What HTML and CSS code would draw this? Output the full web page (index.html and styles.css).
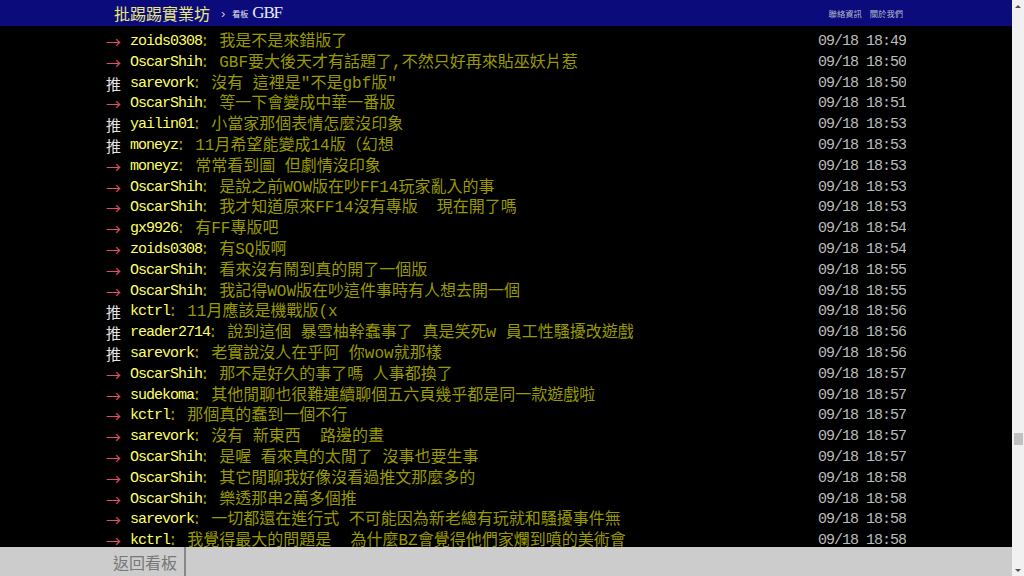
FILE: index.html
```html
<!DOCTYPE html>
<html lang="zh-Hant">
<head>
  <meta charset="UTF-8">
  <meta name="viewport" content="width=device-width, initial-scale=1.0">
  <title>看板 GBF - 批踢踢實業坊</title>
  <link rel="stylesheet" href="styles.css">
</head>
<body>
  <div class="page">
    <div class="main">
      <div id="topbar">
        <div class="topbar-inner">
          <a class="logo" href="#">批踢踢實業坊</a>
          <span class="crumb">›</span>
          <a class="board" href="#"><span class="board-label">看板</span>GBF</a>
          <div class="right">
            <a href="#">聯絡資訊</a>
            <a href="#">關於我們</a>
          </div>
        </div>
      </div>

      <div class="content">
        <div class="bbs-screen">
          <div class="push"><span class="push-tag arrow">→</span><span class="push-userid">zoids0308</span><span class="push-content">: 我是不是來錯版了</span><span class="push-ipdatetime">09/18 18:49</span></div>
          <div class="push"><span class="push-tag arrow">→</span><span class="push-userid">OscarShih</span><span class="push-content">: GBF要大後天才有話題了,不然只好再來貼巫妖片惹</span><span class="push-ipdatetime">09/18 18:50</span></div>
          <div class="push"><span class="push-tag">推</span><span class="push-userid">sarevork</span><span class="push-content">: 沒有 這裡是"不是gbf版"</span><span class="push-ipdatetime">09/18 18:50</span></div>
          <div class="push"><span class="push-tag arrow">→</span><span class="push-userid">OscarShih</span><span class="push-content">: 等一下會變成中華一番版</span><span class="push-ipdatetime">09/18 18:51</span></div>
          <div class="push"><span class="push-tag">推</span><span class="push-userid">yailin01</span><span class="push-content">: 小當家那個表情怎麼沒印象</span><span class="push-ipdatetime">09/18 18:53</span></div>
          <div class="push"><span class="push-tag">推</span><span class="push-userid">moneyz</span><span class="push-content">: 11月希望能變成14版（幻想</span><span class="push-ipdatetime">09/18 18:53</span></div>
          <div class="push"><span class="push-tag arrow">→</span><span class="push-userid">moneyz</span><span class="push-content">: 常常看到圖 但劇情沒印象</span><span class="push-ipdatetime">09/18 18:53</span></div>
          <div class="push"><span class="push-tag arrow">→</span><span class="push-userid">OscarShih</span><span class="push-content">: 是說之前WOW版在吵FF14玩家亂入的事</span><span class="push-ipdatetime">09/18 18:53</span></div>
          <div class="push"><span class="push-tag arrow">→</span><span class="push-userid">OscarShih</span><span class="push-content">: 我才知道原來FF14沒有專版  現在開了嗎</span><span class="push-ipdatetime">09/18 18:53</span></div>
          <div class="push"><span class="push-tag arrow">→</span><span class="push-userid">gx9926</span><span class="push-content">: 有FF專版吧</span><span class="push-ipdatetime">09/18 18:54</span></div>
          <div class="push"><span class="push-tag arrow">→</span><span class="push-userid">zoids0308</span><span class="push-content">: 有SQ版啊</span><span class="push-ipdatetime">09/18 18:54</span></div>
          <div class="push"><span class="push-tag arrow">→</span><span class="push-userid">OscarShih</span><span class="push-content">: 看來沒有鬧到真的開了一個版</span><span class="push-ipdatetime">09/18 18:55</span></div>
          <div class="push"><span class="push-tag arrow">→</span><span class="push-userid">OscarShih</span><span class="push-content">: 我記得WOW版在吵這件事時有人想去開一個</span><span class="push-ipdatetime">09/18 18:55</span></div>
          <div class="push"><span class="push-tag">推</span><span class="push-userid">kctrl</span><span class="push-content">: 11月應該是機戰版(x</span><span class="push-ipdatetime">09/18 18:56</span></div>
          <div class="push"><span class="push-tag">推</span><span class="push-userid">reader2714</span><span class="push-content">: 說到這個 暴雪柚幹蠢事了 真是笑死w 員工性騷擾改遊戲</span><span class="push-ipdatetime">09/18 18:56</span></div>
          <div class="push"><span class="push-tag">推</span><span class="push-userid">sarevork</span><span class="push-content">: 老實說沒人在乎阿 你wow就那樣</span><span class="push-ipdatetime">09/18 18:56</span></div>
          <div class="push"><span class="push-tag arrow">→</span><span class="push-userid">OscarShih</span><span class="push-content">: 那不是好久的事了嗎 人事都換了</span><span class="push-ipdatetime">09/18 18:57</span></div>
          <div class="push"><span class="push-tag arrow">→</span><span class="push-userid">sudekoma</span><span class="push-content">: 其他閒聊也很難連續聊個五六頁幾乎都是同一款遊戲啦</span><span class="push-ipdatetime">09/18 18:57</span></div>
          <div class="push"><span class="push-tag arrow">→</span><span class="push-userid">kctrl</span><span class="push-content">: 那個真的蠢到一個不行</span><span class="push-ipdatetime">09/18 18:57</span></div>
          <div class="push"><span class="push-tag arrow">→</span><span class="push-userid">sarevork</span><span class="push-content">: 沒有 新東西  路邊的畫</span><span class="push-ipdatetime">09/18 18:57</span></div>
          <div class="push"><span class="push-tag arrow">→</span><span class="push-userid">OscarShih</span><span class="push-content">: 是喔 看來真的太閒了 沒事也要生事</span><span class="push-ipdatetime">09/18 18:57</span></div>
          <div class="push"><span class="push-tag arrow">→</span><span class="push-userid">OscarShih</span><span class="push-content">: 其它閒聊我好像沒看過推文那麼多的</span><span class="push-ipdatetime">09/18 18:58</span></div>
          <div class="push"><span class="push-tag arrow">→</span><span class="push-userid">OscarShih</span><span class="push-content">: 樂透那串2萬多個推</span><span class="push-ipdatetime">09/18 18:58</span></div>
          <div class="push"><span class="push-tag arrow">→</span><span class="push-userid">sarevork</span><span class="push-content">: 一切都還在進行式 不可能因為新老總有玩就和騷擾事件無</span><span class="push-ipdatetime">09/18 18:58</span></div>
          <div class="push"><span class="push-tag arrow">→</span><span class="push-userid">kctrl</span><span class="push-content">: 我覺得最大的問題是  為什麼BZ會覺得他們家爛到噴的美術會</span><span class="push-ipdatetime">09/18 18:58</span></div>
        </div>
      </div>

      <div id="navigation">
        <div class="navigation-inner">
          <a class="back" href="#">返回看板</a>
        </div>
      </div>
    </div>

    <div class="scrollbar">
      <span class="scroll-btn up"></span>
      <div class="scroll-track">
        <div class="scroll-thumb"></div>
      </div>
      <span class="scroll-btn down"></span>
    </div>
  </div>
</body>
</html>
```

FILE: styles.css
```css
* {
  margin: 0;
  padding: 0;
  box-sizing: border-box;
}

body {
  background: #000;
  font-family: "Liberation Mono", "Noto Sans CJK TC", monospace;
  font-size: 16px;
  overflow: hidden;
}

a {
  text-decoration: none;
  color: inherit;
}

.page {
  display: flex;
  width: 100%;
  height: 100vh;
}

.main {
  flex: 1;
  display: flex;
  flex-direction: column;
  min-width: 0;
}

/* top bar */
#topbar {
  height: 26px;
  background: #0b0b7c;
  flex-shrink: 0;
}

.topbar-inner {
  width: 800px;
  height: 100%;
  margin: 0 auto;
  display: flex;
  align-items: center;
}

.logo {
  padding-left: 8px;
  color: #e9e97a;
  font-family: "Noto Sans CJK TC", sans-serif;
  font-size: 16px;
  line-height: 1;
}

.crumb {
  margin: 0 7px 0 11px;
  color: #c8c8d8;
  font-family: "Liberation Sans", sans-serif;
  font-size: 13px;
}

.board {
  display: flex;
  align-items: center;
  color: #e8e8f4;
  font-family: "Liberation Serif", serif;
  font-size: 17px;
  letter-spacing: -1.2px;
}

.board-label {
  margin-right: 4px;
  font-family: "Noto Sans CJK TC", sans-serif;
  font-size: 8px;
  letter-spacing: 0;
}

.right {
  margin-left: auto;
  padding-right: 3px;
  display: flex;
  gap: 8px;
  font-family: "Noto Sans CJK TC", sans-serif;
  font-size: 8.3px;
  color: #b8b8d0;
}

/* push list */
.content {
  flex: 1;
  overflow: hidden;
  background: #000;
}

.bbs-screen {
  width: 800px;
  margin: 0 auto;
  padding-top: 6px;
}

.push {
  display: flex;
  height: 20.8px;
  line-height: 20.8px;
  white-space: pre;
  overflow: hidden;
}

.push-tag {
  width: 24px;
  flex-shrink: 0;
  color: #e6e6e6;
  font-family: "Noto Sans CJK TC", sans-serif;
  font-size: 15px;
}

.push-tag.arrow {
  color: #e0505e;
}

.push-userid {
  color: #ff6;
  font-size: 15px;
  letter-spacing: -1px;
}

.push-content {
  flex: 1;
  overflow: hidden;
  margin-left: -2px;
  color: #990;
}

.push-ipdatetime {
  color: #bbb;
  font-size: 15px;
  letter-spacing: -1px;
}

/* bottom bar */
#navigation {
  height: 29px;
  background: #ccc;
  flex-shrink: 0;
}

.navigation-inner {
  width: 800px;
  height: 100%;
  margin: 0 auto;
  display: flex;
}

.back {
  display: flex;
  align-items: center;
  padding: 0 7px;
  border-right: 2px solid #888;
  color: #777;
  font-family: "Noto Sans CJK TC", sans-serif;
  font-size: 16px;
}

/* scrollbar */
.scrollbar {
  width: 12px;
  flex-shrink: 0;
  display: flex;
  flex-direction: column;
  background: #f1f1f1;
}

.scroll-btn {
  height: 12px;
  display: flex;
  justify-content: center;
  align-items: center;
}

.scroll-btn::before {
  content: "";
  border-left: 3px solid transparent;
  border-right: 3px solid transparent;
}

.scroll-btn.up::before {
  border-bottom: 3px solid #505050;
}

.scroll-btn.down::before {
  border-top: 3px solid #505050;
}

.scroll-track {
  flex: 1;
  padding: 0 1px 0 2px;
}

.scroll-thumb {
  margin-top: 421px;
  height: 12px;
  background: #c1c1c1;
}
```
